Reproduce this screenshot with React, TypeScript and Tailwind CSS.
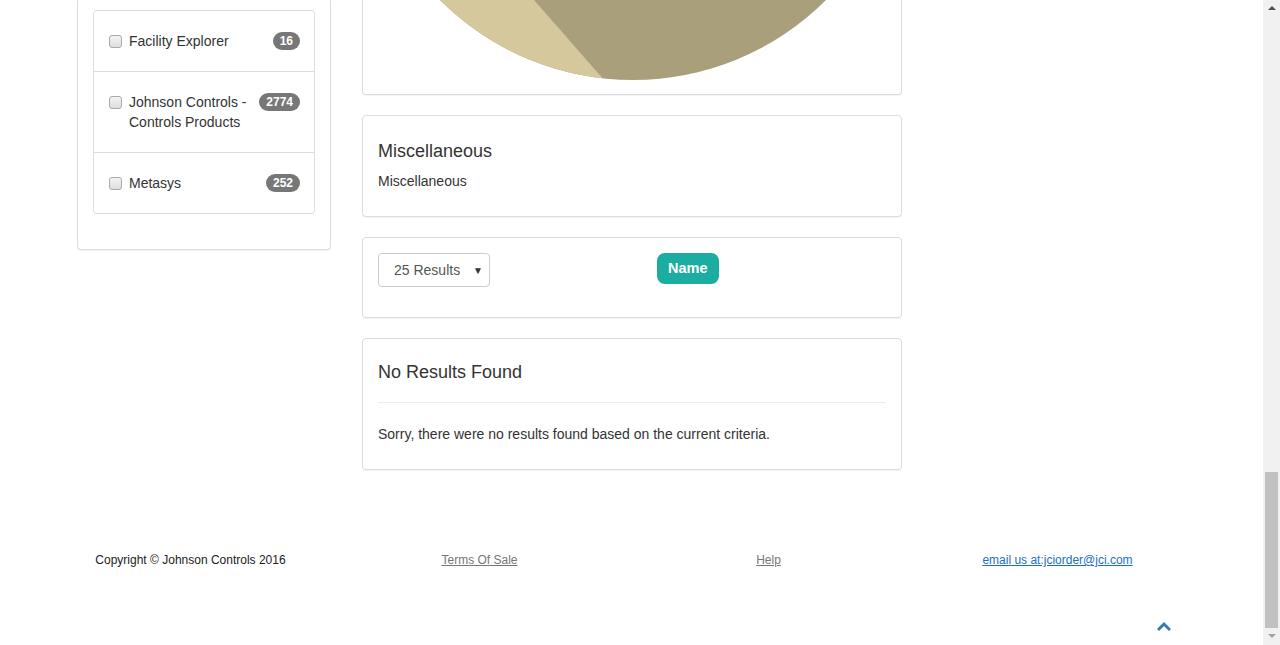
import React from "react";

const font = { fontFamily: '"Liberation Sans", Arial, Helvetica, sans-serif' };

function Check() {
  return (
    <span className="mt-[4px] inline-block h-[13px] w-[13px] shrink-0 rounded-[3px] border border-[#a9a9a9] bg-gradient-to-b from-[#f4f4f4] to-[#dedede]" />
  );
}

function Row({ label, count, last }: { label: React.ReactNode; count: string; last?: boolean }) {
  return (
    <div className={`flex items-start px-[15px] py-[20px] ${last ? "" : "border-b border-[#ddd]"}`}>
      <Check />
      <span className="ml-[7px] w-[124px] text-[14px] leading-[20px] text-[#333]">{label}</span>
      <span className="ml-auto mr-[-1px] mt-[1px] rounded-full bg-[#777] px-[7px] py-[3px] text-[12px] font-bold leading-[12px] text-white">
        {count}
      </span>
    </div>
  );
}

function Panel({ children, className = "" }: { children: React.ReactNode; className?: string }) {
  return (
    <div className={`rounded-[4px] border border-[#ddd] bg-white shadow-[0_1px_1px_rgba(0,0,0,0.05)] ${className}`}>
      {children}
    </div>
  );
}

export default function App() {
  return (
    <div className="flex h-[645px] w-[1280px] overflow-hidden bg-white" style={font}>
      <div className="relative flex-1">
        <div className="flex pl-[77px]">
          {/* Sidebar */}
          <div className="w-[254px]">
            <div className="rounded-b-[4px] border border-t-0 border-[#ddd] px-[15px] pb-[35px] pt-[10px] shadow-[0_1px_1px_rgba(0,0,0,0.05)]">
              <div className="rounded-[4px] border border-[#ddd]">
                <Row label="Facility Explorer" count="16" />
                <Row label="Johnson Controls - Controls Products" count="2774" />
                <Row label="Metasys" count="252" last />
              </div>
            </div>
          </div>

          {/* Main */}
          <div className="ml-[31px] flex w-[540px] flex-col gap-[20px]">
            <div className="rounded-b-[4px] border border-t-0 border-[#ddd] pb-[14px] shadow-[0_1px_1px_rgba(0,0,0,0.05)]">
              <svg width="538" height="80" viewBox="0 0 538 80" className="block">
                <defs>
                  <clipPath id="pie">
                    <circle cx="270" cy="-193" r="273" />
                  </clipPath>
                </defs>
                <circle cx="270" cy="-193" r="273" fill="#aa9f7b" />
                <polygon points="0,0 171,0 242,81 0,81" fill="#d4c89c" clipPath="url(#pie)" />
              </svg>
            </div>

            <Panel className="p-[15px]">
              <h4 className="mb-[10px] mt-[10px] text-[18px] leading-[20px] text-[#333]">Miscellaneous</h4>
              <p className="mb-[10px] text-[14px] leading-[20px] text-[#333]">Miscellaneous</p>
            </Panel>

            <Panel className="p-[15px]">
              <div className="mb-[15px] flex items-start">
                <div className="flex h-[34px] w-[112px] items-center rounded-[4px] border border-[#ccc] pl-[15px] pr-[6px]">
                  <span className="w-[66px] overflow-hidden whitespace-nowrap text-[14px] text-[#555]">25 Results</span>
                  <span className="ml-auto text-[10px] text-[#333]">▼</span>
                </div>
                <div className="ml-[167px] flex h-[31px] items-center rounded-[8px] bg-[#1bada1] px-[11px] text-[14.5px] font-bold text-white">
                  Name
                </div>
              </div>
            </Panel>

            <Panel className="p-[15px]">
              <h4 className="mt-[8px] text-[18px] leading-[20px] text-[#333]">No Results Found</h4>
              <hr className="mb-[21px] mt-[20px] border-t border-[#eee]" />
              <p className="mb-[10px] text-[14px] leading-[20px] text-[#333]">
                Sorry, there were no results found based on the current criteria.
              </p>
            </Panel>
          </div>
        </div>

        {/* Footer */}
        <div className="ml-[46px] mt-[82px] flex text-[12px] leading-[17px]">
          <div className="w-[289px] text-center text-[#222]">Copyright © Johnson Controls 2016</div>
          <div className="w-[289px] text-center">
            <span className="text-[#777] underline">Terms Of Sale</span>
          </div>
          <div className="w-[289px] text-center">
            <span className="text-[#777] underline">Help</span>
          </div>
          <div className="w-[289px] text-center">
            <span className="text-[#1c6fc8] underline">email us at:jciorder@jci.com</span>
          </div>
        </div>

        {/* Back to top */}
        <svg className="absolute left-[1157px] top-[620px]" width="14" height="12" viewBox="0 0 14 12">
          <path d="M2 9 L7 4 L12 9" fill="none" stroke="#337ab7" strokeWidth="3" strokeLinecap="square" />
        </svg>
      </div>

      {/* Scrollbar */}
      <div className="flex w-[17px] flex-col items-center bg-[#f1f1f1]">
        <div className="mt-[6px] h-0 w-0 border-x-[4px] border-b-[4px] border-x-transparent border-b-[#505050]" />
        <div className="mt-[462px] h-[156px] w-[13px] bg-[#c1c1c1]" />
        <div className="mt-[6px] h-0 w-0 border-x-[4px] border-t-[4px] border-x-transparent border-t-[#a3a3a3]" />
      </div>
    </div>
  );
}
